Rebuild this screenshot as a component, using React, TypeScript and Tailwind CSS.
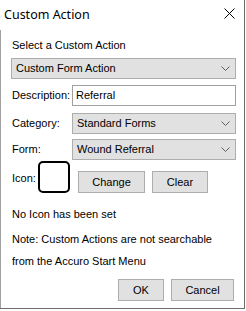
const Chevron = () => (
  <svg width="9" height="5" viewBox="0 0 9 5" className="text-[#606060]">
    <path d="M0.5 0.5 L4.5 4.5 L8.5 0.5" fill="none" stroke="currentColor" strokeWidth="1" />
  </svg>
);

const Select = ({ value, className }: { value: string; className: string }) => (
  <div
    className={`flex h-[21px] items-center justify-between border border-[#adadad] bg-[#e1e1e1] pr-[5px] pl-[4px] ${className}`}
  >
    <span className="leading-[13px]">{value}</span>
    <Chevron />
  </div>
);

const Button = ({ label, className }: { label: string; className: string }) => (
  <div
    className={`flex h-[22px] items-center justify-center border border-[#adadad] bg-[#e1e1e1] leading-[13px] ${className}`}
  >
    {label}
  </div>
);

export default function App() {
  return (
    <div
      className="flex h-[309px] w-[245px] flex-col border-r border-b border-[#6e6e6e] bg-white text-[11px] text-black"
      style={{ fontFamily: '"Liberation Sans", Arial, sans-serif' }}
    >
      {/* title bar */}
      <div className="flex h-[30px] shrink-0 items-center justify-between pr-[9px] pl-[4px]">
        <span
          className="text-[12.5px] leading-[16px]"
          style={{ fontFamily: '"Noto Sans", "Liberation Sans", sans-serif' }}
        >
          Custom Action
        </span>
        <svg width="11" height="11" viewBox="0 0 11 11" className="mt-[-4px]">
          <path d="M0.5 0.5 L10.5 10.5 M10.5 0.5 L0.5 10.5" stroke="black" strokeWidth="1" fill="none" />
        </svg>
      </div>

      {/* body */}
      <div className="flex flex-1 flex-col border-l border-[#a0a0a0] pt-[9px] pl-[10px]">
        <span className="ml-[1px] leading-[13px]">Select a Custom Action</span>
        <Select value="Custom Form Action" className="mt-[6px] w-[225px]" />

        <div className="mt-[6px] flex items-center">
          <span className="ml-[1px] w-[60px] leading-[13px]">Description:</span>
          <div className="flex h-[21px] w-[164px] items-center border border-[#a0a0a0] bg-white pl-[3px] leading-[13px]">
            Referral
          </div>
        </div>

        <div className="mt-[7px] flex items-center">
          <span className="ml-[1px] w-[60px] leading-[13px]">Category:</span>
          <Select value="Standard Forms" className="w-[164px]" />
        </div>

        <div className="mt-[5px] flex items-center">
          <span className="ml-[1px] w-[60px] leading-[13px]">Form:</span>
          <Select value="Wound Referral" className="w-[164px]" />
        </div>

        <div className="mt-px flex items-start">
          <span className="mt-[11px] ml-[1px] w-[26px] leading-[13px]">Icon:</span>
          <div className="h-[32px] w-[32px] rounded-[5px] border-2 border-black" />
          <Button label="Change" className="mt-[10px] ml-[8px] w-[67px]" />
          <Button label="Clear" className="mt-[10px] ml-[7px] w-[56px]" />
        </div>

        <span className="mt-[15px] ml-[1px] leading-[13px]">No Icon has been set</span>
        <span className="mt-[12px] ml-[1px] leading-[13px]">
          Note: Custom Actions are not searchable
        </span>
        <span className="mt-[9px] ml-[1px] leading-[13px]">from the Accuro Start Menu</span>

        <div className="mt-[11px] flex">
          <Button label="OK" className="ml-[107px] w-[46px]" />
          <Button label="Cancel" className="ml-[7px] w-[63px]" />
        </div>
      </div>
    </div>
  );
}
